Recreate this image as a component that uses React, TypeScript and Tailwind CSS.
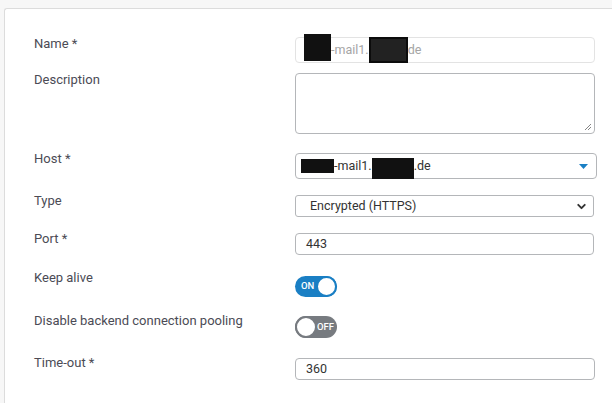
import { ChevronDown } from 'lucide-react'

function Label({ children, offset }: { children: React.ReactNode; offset: string }) {
  return <div className={`w-[261px] shrink-0 text-[13px] leading-4 text-[#4b4b55] ${offset}`}>{children}</div>
}

function Toggle({ on }: { on: boolean }) {
  return on ? (
    <div className="relative flex h-[21px] w-[42px] items-center rounded-full bg-[#1a7fc4] pl-[6px]">
      <span className="text-[9.5px] font-medium text-white">ON</span>
      <span className="absolute right-0 top-0 h-[21px] w-[21px] rounded-full border-2 border-[#1a7fc4] bg-white" />
    </div>
  ) : (
    <div className="relative flex h-[22px] w-[42px] items-center justify-end rounded-full bg-[#777b80] pr-[3px]">
      <span className="text-[9.5px] font-medium text-white">OFF</span>
      <span className="absolute left-0 top-0 h-[22px] w-[22px] rounded-full border-2 border-[#777b80] bg-white" />
    </div>
  )
}

export default function App() {
  return (
    <div className="h-[403px] w-[612px] overflow-hidden bg-[#f7f7f7] pl-[4px] pt-[8px] font-['Roboto',sans-serif]">
      <div className="h-full rounded-tl-[3px] border-l border-t border-[#dcdcdc] bg-white pl-[29px] pt-[28px]">
        {/* Name */}
        <div className="flex items-start">
          <Label offset="-mt-[1px]">Name *</Label>
          <div className="flex h-[26px] w-[300px] items-center rounded-[4px] border border-[#e3e3e3] pl-[8px] text-[12.5px] text-[#a5a5a5]">
            <span className="relative -top-[3px] h-[27px] w-[27px] shrink-0 bg-[#111]" />
            <span>-mail1.</span>
            <span className="h-[26px] w-[39px] shrink-0 border-2 border-[#0c0c0c] bg-[#222]" />
            <span>de</span>
          </div>
        </div>

        {/* Description */}
        <div className="mt-[10px] flex items-start">
          <Label offset="-mt-[1px]">Description</Label>
          <div className="relative h-[61px] w-[300px] rounded-[4px] border border-[#b4b6b9]">
            <svg className="absolute bottom-[2px] right-[2px]" width="8" height="8" viewBox="0 0 8 8">
              <path d="M1 7 L7 1 M4 7 L7 4" stroke="#666" strokeWidth="0.8" />
            </svg>
          </div>
        </div>

        {/* Host */}
        <div className="mt-[19px] flex items-start">
          <Label offset="-mt-[2px]">Host *</Label>
          <div className="relative flex h-[26px] w-[302px] items-center rounded-[4px] border border-[#b4b6b9] pl-[5px] text-[12.5px] text-[#333]">
            <span className="h-[14px] w-[33px] shrink-0 bg-[#111]" />
            <span>-mail1.</span>
            <span className="relative top-[2px] h-[21px] w-[42px] shrink-0 bg-[#111]" />
            <span>.de</span>
            <svg className="absolute right-[8px] top-[10px]" width="9" height="5" viewBox="0 0 9 5">
              <path d="M0 0 H9 L4.5 5 Z" fill="#1a7fc4" />
            </svg>
          </div>
        </div>

        {/* Type */}
        <div className="mt-[16px] flex items-start">
          <Label offset="-mt-[2px]">Type</Label>
          <div className="relative flex h-[22px] w-[299px] items-center rounded-[3px] border border-[#b4b6b9] pl-[14px] text-[12.5px] text-[#333]">
            Encrypted (HTTPS)
            <ChevronDown className="absolute right-[5px] top-[4px] h-[13px] w-[13px] text-[#333]" strokeWidth={3.5} />
          </div>
        </div>

        {/* Port */}
        <div className="mt-[16px] flex items-start">
          <Label offset="-mt-[2px]">Port *</Label>
          <div className="flex h-[22px] w-[299px] items-center rounded-[4px] border border-[#b4b6b9] pl-[10px] text-[12.5px] text-[#333]">
            443
          </div>
        </div>

        {/* Keep alive */}
        <div className="mt-[21px] flex items-start">
          <Label offset="-mt-[6px]">Keep alive</Label>
          <Toggle on />
        </div>

        {/* Disable backend connection pooling */}
        <div className="mt-[19px] flex items-start">
          <Label offset="-mt-[3px]">Disable backend connection pooling</Label>
          <Toggle on={false} />
        </div>

        {/* Time-out */}
        <div className="mt-[20px] flex items-start">
          <Label offset="-mt-[3px]">Time-out *</Label>
          <div className="flex h-[22px] w-[300px] items-center rounded-[4px] border border-[#b4b6b9] pl-[10px] text-[12.5px] text-[#333]">
            360
          </div>
        </div>
      </div>
    </div>
  )
}
